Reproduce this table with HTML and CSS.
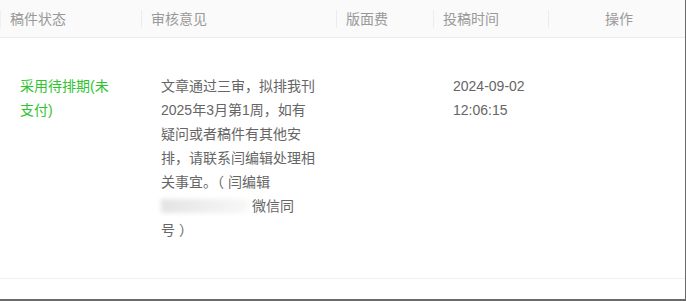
FILE: index.html
```html
<!DOCTYPE html>
<html lang="zh-CN">
<head>
<meta charset="utf-8">
<link rel="stylesheet" href="styles.css">
</head>
<body>
<div class="frame">
  <table class="grid">
    <colgroup>
      <col class="c1"><col class="c2"><col class="c3"><col class="c4"><col class="c5">
    </colgroup>
    <thead>
      <tr>
        <th><span class="hd first">稿件状态</span></th>
        <th><span class="hd">审核意见</span></th>
        <th><span class="hd">版面费</span></th>
        <th><span class="hd">投稿时间</span></th>
        <th class="center"><span class="hd">操作</span></th>
      </tr>
    </thead>
    <tbody>
      <tr>
        <td><span class="status">采用待排期(未支付)</span></td>
        <td>文章通过三审，拟排我刊2025年3月第1周，如有疑问或者稿件有其他安排，请联系闫编辑处理相关事宜。（ 闫编辑 <span class="redact"></span> 微信同号&nbsp;）</td>
        <td></td>
        <td>2024-09-02 12:06:15</td>
        <td></td>
      </tr>
    </tbody>
  </table>
</div>
</body>
</html>
```

FILE: styles.css
```css
html, body {
  margin: 0;
  padding: 0;
  background: #fff;
}
.frame {
  width: 685px;
  height: 299px;
  border-right: 1px solid #6a6a6a;
  border-bottom: 2px solid #6a6a6a;
  overflow: hidden;
  font-family: "Liberation Sans", "Noto Sans CJK SC", sans-serif;
}
.grid {
  width: 685px;
  border-collapse: collapse;
  table-layout: fixed;
}
.c1 { width: 141px; }
.c2 { width: 195px; }
.c3 { width: 97px; }
.c4 { width: 115px; }
.c5 { width: 137px; }
thead th {
  background: #fafafa;
  height: 37px;
  padding: 0;
  border-bottom: 1px solid #ebebeb;
  text-align: left;
  font-weight: normal;
  font-size: 14px;
  color: #999;
}
thead th.center { text-align: center; }
.hd {
  display: block;
  margin: 0;
  padding: 0 0 0 9px;
  line-height: 18px;
  border-left: 1px solid #ececec;
}
.center .hd { padding-left: 4px; }
.hd.first { border-left-color: #f0f0f0; }
tbody td {
  vertical-align: top;
  padding: 36px 20px 36px 20px;
  font-size: 14px;
  line-height: 24px;
  color: #666;
  border-bottom: 1px solid #f0f0f0;
  word-break: break-all;
}
.status { color: #2fc42f; }
.redact {
  display: inline-block;
  width: 87px;
  height: 14px;
  vertical-align: -2px;
  background: linear-gradient(90deg, #e4e4e4, #efefef 55%, #f8f8f8);
  filter: blur(2px);
}
```
